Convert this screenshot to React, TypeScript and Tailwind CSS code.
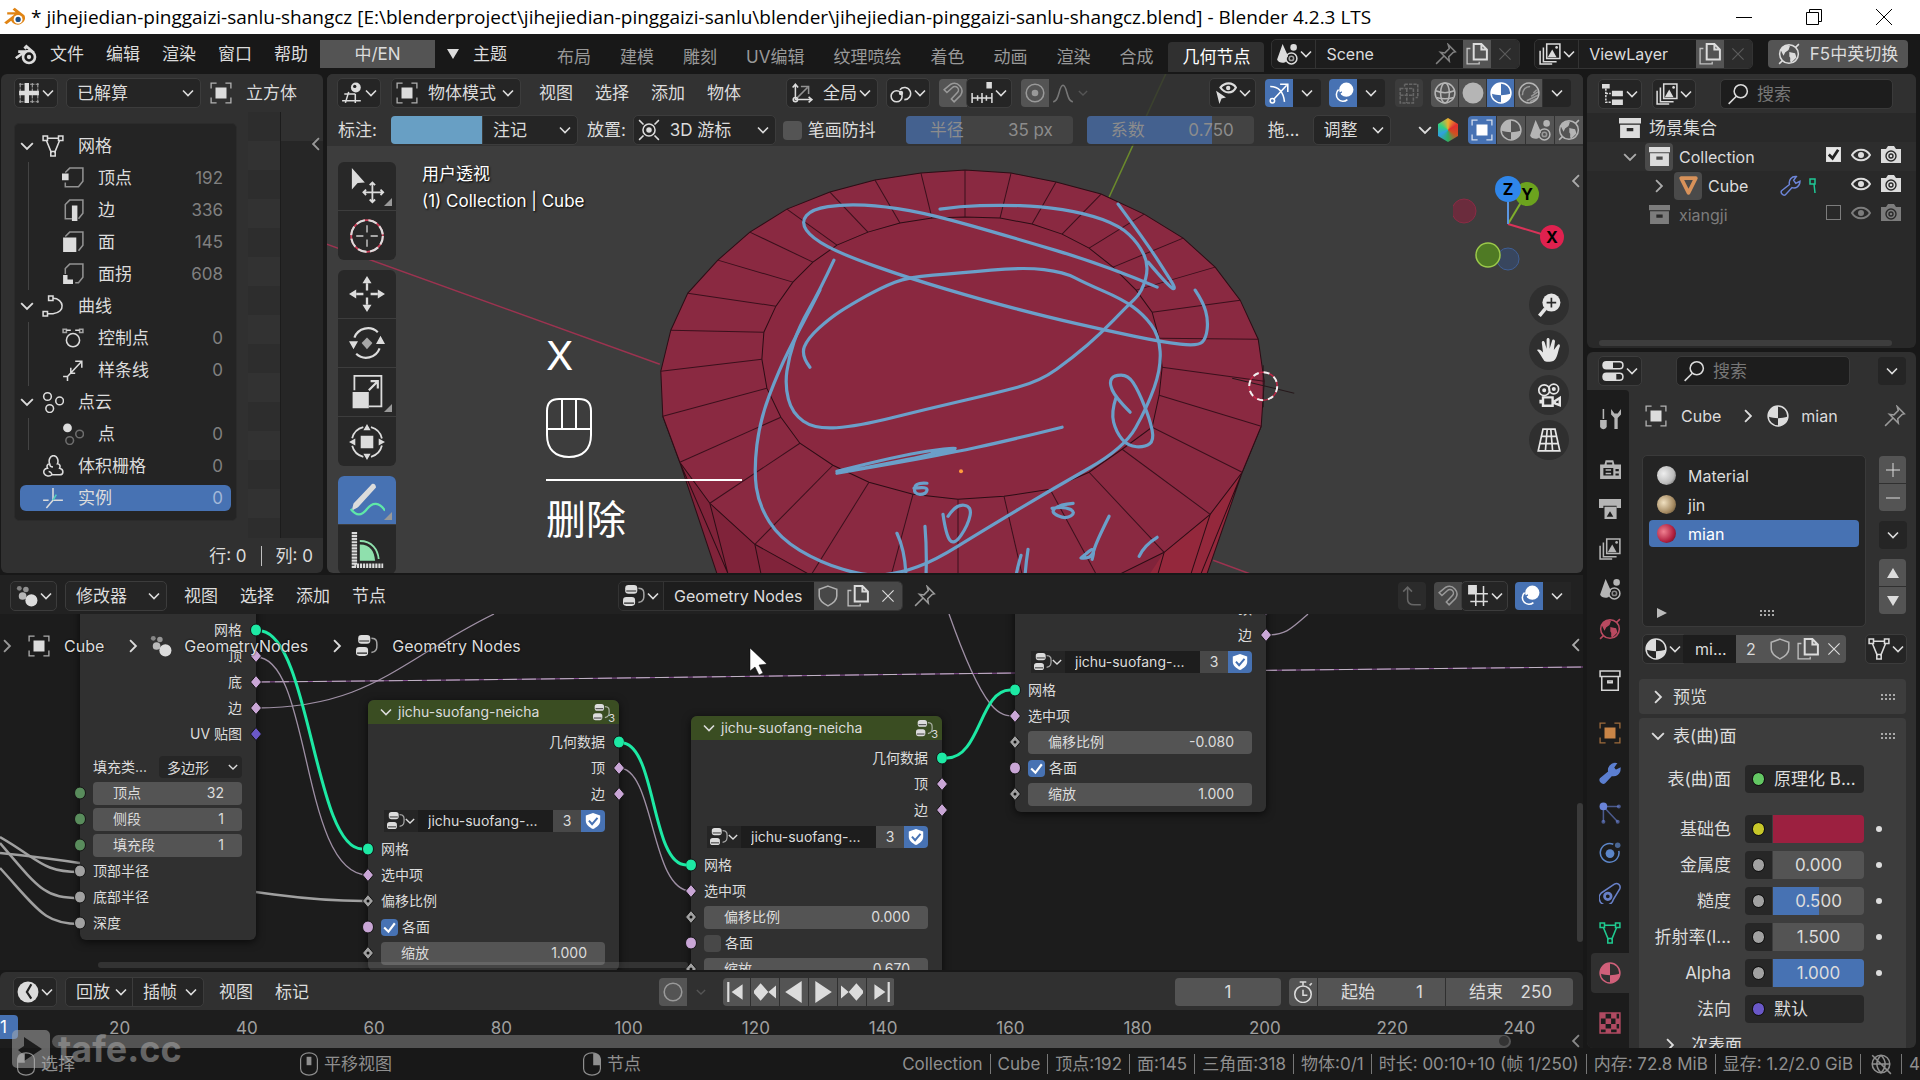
import type { ReactNode } from "react";
import clsx from "clsx";

const icons: Record<string, ReactNode> = {
  blender: (
    <>
      <path d="M1 14.5 9.5 8H3.5V6h7L8 3.800 9.800 2.200l8 6.300a6 5.600 0 1 1-11 4.600L3 16z" fill="currentColor" stroke="none" />
      <circle cx="12.600" cy="12" r="3.700" className="fill-white" stroke="none" />
      <circle cx="12.600" cy="12" r="2.200" className="fill-[#1f4f85]" stroke="none" />
    </>
  ),
  blenderMono: (
    <>
      <path d="M1.500 13.500 9 8H3.500m7-2.500L8.500 4M9.500 3l7 6" strokeWidth="2.200" />
      <circle cx="12.500" cy="12.500" r="5" strokeWidth="2.200" />
      <circle cx="12.500" cy="12.500" r="1.800" fill="currentColor" stroke="none" />
    </>
  ),
  spreadsheet: (
    <>
      <path d="M1 2h18M1 18h18M2 1v18M18 1v18M13 1v18" strokeWidth="1" opacity=".7" strokeDasharray="4 1" />
      <path d="M8 1v18M1 10h18" strokeWidth="4" />
    </>
  ),
  object: (
    <>
      <path d="M1 6V1h5M14 1h5v5M19 14v5h-5M6 19H1v-5" strokeWidth="1.200" opacity=".75" />
      <path d="M5 5h10v10H5z" fill="currentColor" stroke="none" />
    </>
  ),
  viewport: (
    <>
      <path d="M1 17h17M3 11h10M7 9 4 19M13 11v8" />
      <circle cx="13.500" cy="5" r="4.500" fill="currentColor" stroke="none" />
      <circle cx="12.500" cy="4" r="1.500" className="fill-[#222]" stroke="none" />
    </>
  ),
  meshData: (
    <>
      <path d="M5 3h10M4 5l4.500 11M16 5l-4.500 11" />
      <path d="M1 1h4v4H1zM15 1h4v4h-4zM8 15h4v4H8z" />
    </>
  ),
  vertex: (
    <>
      <path d="M3 5 7 1h12v12l-4 5H3v-4" opacity=".6" />
      <path d="M0 6h6v6H0z" fill="currentColor" stroke="none" />
    </>
  ),
  edge: (
    <>
      <path d="M9 18H3V5l4-4h12v12l-4 5" opacity=".6" />
      <path d="M9 6h5v14H9z" fill="currentColor" stroke="none" />
    </>
  ),
  face: (
    <>
      <path d="M3 5 7 1h12v12l-4 5" opacity=".6" />
      <path d="M1 6h12v13H1z" fill="currentColor" stroke="none" />
    </>
  ),
  corner: (
    <>
      <path d="M3 10V5l4-4h12v12l-4 5h-3" opacity=".6" />
      <path d="M1 11h4v4h5v4H1z" fill="currentColor" stroke="none" />
    </>
  ),
  curve: (
    <>
      <path d="M10 3c10 0 12 13 0 14H5" />
      <path d="M6 1h4v4H6zM1 15h4v4H1z" />
    </>
  ),
  controlPoint: (
    <>
      <circle cx="10" cy="12" r="6" />
      <path d="M4 3h4M12 3h4" />
      <path d="M1 2h3v3H1zM16 2h3v3h-3z" opacity=".7" />
    </>
  ),
  spline: <path d="M1 16h4v4M5 16 18 2M12 2h6v6M8 8v5h4" />,
  pointCloud: (
    <>
      <circle cx="5" cy="5" r="3.500" />
      <circle cx="16" cy="9" r="3.500" />
      <circle cx="7" cy="16" r="3.500" />
    </>
  ),
  point: (
    <>
      <circle cx="5" cy="4.500" r="4" fill="currentColor" stroke="none" />
      <circle cx="16" cy="10" r="3.500" opacity=".4" />
      <circle cx="7" cy="16" r="3.500" opacity=".4" />
    </>
  ),
  volume: <path d="M7 8a4 5 0 1 1 7 0c2 0 3 2 2 4 4 1 4 6 0 6H9c-2 2-6 1-7-1s0-5 3-5c-1-2 0-4 2-4zm0 0c0 2 1 3 3 3M9 18c0-2-2-3-3-3" />,
  axes: (
    <>
      <path d="M10 1v11l-6 7M10 12h9M1 12h5" />
      <path d="m10 12 3-5" className="stroke-[#50d0c0]" />
    </>
  ),
  orientation: (
    <>
      <path d="M4 2v14h15M1.500 5 4 2l2.500 3M16 13.500l3 2.500-3 2.500" />
      <path d="M4 16 15 5M9 4h7v7" opacity=".6" />
      <circle cx="4" cy="16" r="2" />
    </>
  ),
  pivot: (
    <>
      <circle cx="6" cy="13" r="5" />
      <path d="M9 7a5.500 5.500 0 1 1 4 9" />
      <circle cx="10" cy="10" r="2" fill="currentColor" stroke="none" />
    </>
  ),
  magnet: <path d="M2 7 8 2a7 7 0 0 1 9 10l-6 6-2.500-2.500 5.500-6a3 3 0 0 0-4.500-4.500L4.500 9.500z" />,
  snap: (
    <>
      <path d="M1 10v9M6 12v5M10 10v9M14 12v5M19 10v9M1 14.500h18" />
      <path d="M14 0h5v6h-5z" fill="currentColor" stroke="none" />
    </>
  ),
  proportional: (
    <>
      <circle cx="10" cy="10" r="8" />
      <circle cx="10" cy="10" r="3" fill="currentColor" stroke="none" />
    </>
  ),
  falloff: <path d="M1 18c6 0 5-15 9-15s3 15 9 15" />,
  visibility: (
    <>
      <path d="M5 5c4-5 11-5 14 0-3 6-10 6-14 0z" strokeWidth="2" />
      <circle cx="12" cy="5.500" r="2" fill="currentColor" stroke="none" />
      <path d="m1 8 9 6-4 1-2 5z" fill="currentColor" stroke="none" />
    </>
  ),
  gizmo: (
    <>
      <path d="M2 4c8 0 12 5 13 14M5 16 17 3M11 2h7v7" />
      <circle cx="4" cy="17" r="2" />
    </>
  ),
  overlay: (
    <>
      <circle cx="13" cy="7" r="6.500" fill="currentColor" stroke="none" />
      <path d="M6 7a6 6 0 1 0 8 9" />
      <path d="M6 12a5 5 0 0 1 3-3" className="stroke-[#4772b3]" />
    </>
  ),
  xray: <path d="M2 6h12v13H2zM6 2h12v12M2 12h12M8 6v13M6 2v2M18 14h-2" strokeDasharray="3 1" />,
  wire: (
    <>
      <circle cx="10" cy="10" r="9" />
      <ellipse cx="10" cy="10" rx="4" ry="9" />
      <path d="M1.500 8c5 2 12 2 17 0M2 14c5 1.500 11 1.500 16 0" />
    </>
  ),
  solid: <circle cx="10" cy="10" r="9.500" fill="currentColor" stroke="none" />,
  material: (
    <>
      <circle cx="10" cy="10" r="9" />
      <path d="M10 1a9 9 0 0 0-9 9.500c3 1 6 1.500 9 1.500z" fill="currentColor" stroke="none" />
      <path d="M10 12c3 0 6-.5 9-1.500A9 9 0 0 1 10 19z" fill="currentColor" stroke="none" />
    </>
  ),
  rendered: (
    <>
      <circle cx="10" cy="10" r="9" />
      <path d="M4 12c0-5 3-8 7-8M8 17l10-5M11 18l6-3M12 13l6-4M14 10l3-3" opacity=".7" />
    </>
  ),
  scene: (
    <>
      <path d="M6 1 1 15c1 3 6 4 8 2 0-2 1-4 2-5z" fill="currentColor" stroke="none" />
      <circle cx="16" cy="4" r="3" fill="currentColor" stroke="none" />
      <circle cx="14" cy="14" r="5" />
      <circle cx="14" cy="14" r="2" opacity=".7" />
    </>
  ),
  world: (
    <>
      <circle cx="10" cy="10" r="8.500" />
      <path d="M3 6c2-3 5-4 7-3l-1 3-3 2-1 2zM11 9l4 1 1 3-4 4c-1-2 1-3-1-5z" fill="currentColor" />
      <path d="m16 4 3-3M4 16l-3 3" />
    </>
  ),
  pin: <path d="m12 1.500 6.500 6.500-2 .5-4 4 .5 4-8-8 4 .5 4-4zM8 12l-7 7" />,
  copy: (
    <>
      <path d="M7 1h7l5 5v9H7zM14 1v5h5" strokeWidth="1.800" />
      <path d="M4 5H1v14h11v-2" strokeWidth="1.200" opacity=".8" />
    </>
  ),
  close: <path d="m3 3 14 14M17 3 3 17" />,
  shield: <path d="m10 1 8 3v6c0 4-4 7-8 9-4-2-8-5-8-9V4z" opacity=".7" />,
  shieldCheck: (
    <>
      <path d="m10 1 8 3v6c0 4-4 7-8 9-4-2-8-5-8-9V4z" fill="currentColor" stroke="none" />
      <path d="m5.500 9.500 3.500 4 6-7" className="stroke-[#4772b3]" strokeWidth="2.200" />
    </>
  ),
  images: (
    <>
      <path d="M7 1h12v13H7zM4 4v13h12M1 7v12h11" />
      <path d="m8 13 4-7 4 7z" fill="currentColor" stroke="none" />
      <circle cx="16" cy="4" r="1.200" fill="currentColor" stroke="none" />
    </>
  ),
  tree: (
    <>
      <path d="M0 1h7v4H0zM9 7h10v5H9zM9 15h10v5H9z" fill="currentColor" stroke="none" />
      <path d="M3.500 5v12.500H8M3.500 9.500H8" strokeDasharray="2 1" />
    </>
  ),
  search: (
    <>
      <circle cx="12.500" cy="7.500" r="6" />
      <path d="m8.500 12-7 7" />
    </>
  ),
  collection: (
    <path fillRule="evenodd" d="M0 1h20v5H0zM1 7h18v12H1zm6 3v3h6v-3z" fill="currentColor" stroke="none" />
  ),
  collectionLine: <path d="M1 1h18v5H1zM2.500 6v12.500h15V6M8 10h4v1.500H8z" />,
  eye: (
    <>
      <path d="M1 10c4-7 14-7 18 0-4 7-14 7-18 0z" strokeWidth="2" />
      <circle cx="10" cy="10" r="3" fill="currentColor" stroke="none" />
    </>
  ),
  camera: (
    <>
      <path d="M0 4h5l2-3h6l2 3h5v14H0z" fill="currentColor" stroke="none" />
      <circle cx="10" cy="11" r="5" className="stroke-[#2a2a2a]" />
      <circle cx="10" cy="11" r="2" className="stroke-[#2a2a2a]" />
    </>
  ),
  objectMesh: <path d="M3 3h14l-7 14z" strokeWidth="3.500" strokeLinejoin="round" />,
  wrenchLine: <path d="M1.500 15 9 9c-1-4 2-8 6.500-7.500L13 5l2 3 4-2c0 5-4 7-7.500 6L5 19c-2 1-5-2-3.500-4z" />,
  wrench: <path d="M1.500 15 9 9c-1-4 2-8 6.500-7.500L13 5l2 3 4-2c0 5-4 7-7.500 6L5 19c-2 1-5-2-3.500-4z" fill="currentColor" />,
  toggles: (
    <>
      <rect x="1" y="1.500" width="18" height="6.500" rx="3" />
      <rect x="1" y="12" width="18" height="6.500" rx="3" />
      <path d="M4 1.500h6V8H4a3 3 0 0 1 0-6.500M4 12h9v6.500H4A3 3 0 0 1 4 12" fill="currentColor" stroke="none" />
    </>
  ),
  tools: (
    <>
      <path d="M4 1v9" />
      <path d="M1 11h6v6c-1 3-5 3-6 0z" fill="currentColor" stroke="none" />
      <path d="M11 1v5l3 3v10h3V9l3-3V1l-3 4h-3z" fill="currentColor" stroke="none" />
    </>
  ),
  render: (
    <>
      <path fillRule="evenodd" d="M1 6h4l1-4h7l1 4h6v13H1zm3 3v7h9V9zM7 4v2h5V4zm8 6v2h3v-2zm0 4v2h3v-2z" fill="currentColor" stroke="none" />
      <path d="M6 11h5M6 14h5" />
    </>
  ),
  printer: (
    <>
      <path d="M0 1h20v8h-4V7H4v2H0z" fill="currentColor" stroke="none" />
      <path fillRule="evenodd" d="M5 8h11v11H5zm2 9h6l-3-5z" fill="currentColor" stroke="none" />
    </>
  ),
  particles: (
    <>
      <path d="M4 4v14M4 4h14M4 4l13 14" opacity=".6" />
      <circle cx="4" cy="4" r="3.500" fill="currentColor" stroke="none" />
      <circle cx="18" cy="4" r="1.800" fill="currentColor" stroke="none" opacity=".6" />
      <circle cx="4" cy="18" r="1.800" fill="currentColor" stroke="none" opacity=".6" />
      <circle cx="17" cy="18" r="1.800" fill="currentColor" stroke="none" opacity=".6" />
    </>
  ),
  physics: (
    <>
      <path d="M13 2a8.500 8.500 0 1 0 5 6" />
      <circle cx="10" cy="10.500" r="4" fill="currentColor" stroke="none" />
      <circle cx="17" cy="3" r="2.500" fill="currentColor" stroke="none" opacity=".7" />
    </>
  ),
  constraint: (
    <>
      <path d="M2 10 14 2c3-2 6 1 5 4l-6 10a6.500 6.500 0 1 1-11-6z" />
      <circle cx="8" cy="13" r="3" strokeWidth="2.500" />
    </>
  ),
  texture: (
    <>
      <path d="M1 1h18v18H1z" />
      <path d="M1 1h5v5H1zM11 1h5v5h-5zM6 6h5v5H6zM15 6h4v5h-4zM1 11h5v5H1zM11 11h5v5h-5zM6 15h5v4H6zM16 15h3v4h-3z" fill="currentColor" stroke="none" />
    </>
  ),
  nodeTree: (
    <>
      <rect x="2" y="0" width="11" height="8" rx="3" fill="currentColor" stroke="none" />
      <rect x="0" y="11" width="11" height="8" rx="3" fill="currentColor" stroke="none" />
      <path d="M3 5.500h9M1 16.500h9" className="stroke-[#222]" strokeWidth="1" />
      <path d="M14 3c5 0 5 3 5 6s0 6-5 7" opacity=".7" />
    </>
  ),
  geoNodes: (
    <>
      <circle cx="14" cy="14" r="5.500" fill="currentColor" stroke="none" />
      <circle cx="6" cy="10" r="3.500" fill="currentColor" stroke="none" opacity=".8" />
      <circle cx="9" cy="4" r="2.500" fill="currentColor" stroke="none" opacity=".6" />
      <circle cx="3" cy="3" r="2.200" fill="currentColor" stroke="none" opacity=".5" />
    </>
  ),
  parent: <path d="M2 6 6 2l4 4M6 2v11c0 4 3 5 6 5h6" />,
  gridSnap: (
    <>
      <path d="M8 3v16M15 1v18M1 8h18M3 15h16" />
      <path d="M1 0h8v8H1z" fill="currentColor" stroke="none" />
    </>
  ),
  clock: (
    <>
      <circle cx="10" cy="10" r="9.500" fill="currentColor" stroke="none" />
      <path d="m13 3-4 7 4 6" className="stroke-[#222]" strokeWidth="2" />
    </>
  ),
  stopwatch: (
    <>
      <circle cx="10" cy="12" r="7.500" />
      <path d="M7 1h6M10 1v3M16 4l2-2M10 8v5h4" />
    </>
  ),
  cursor3d: (
    <>
      <circle cx="10" cy="10" r="5.500" />
      <circle cx="10" cy="10" r="2.500" fill="currentColor" stroke="none" />
      <path d="m1 1 4 4M19 1l-4 4M1 19l4-4M19 19l-4-4" />
    </>
  ),
  mouse: <path d="M3 6c0-7 14-7 14 0v8c0 7-14 7-14 0z" />,
  globeOff: (
    <>
      <circle cx="10" cy="10" r="8" />
      <path d="M2 10h16M10 2c-5 5-5 11 0 16 5-5 5-11 0-16M2 2l17 17" />
    </>
  ),
  zoom: (
    <>
      <circle cx="12" cy="8" r="7.500" fill="currentColor" stroke="none" />
      <path d="m7 13-5 6" strokeWidth="3" />
      <path d="M12 4v8M8 8h8" className="stroke-[#2b2b2b]" />
    </>
  ),
  hand: <path d="M6 19c-2-3-4-7-6-9 2-1 3 0 5 2L4 4c0-2 2-2 2.500 0L8 9V1.500c0-2 2.500-2 2.500 0V9l2-6.500c.5-2 2.500-1.500 2.500.5L14 10l3-4c1-1.500 2.500-.5 2 1-2 5-2 12-7 12.500-2 .5-5 .5-6-.5z" fill="currentColor" stroke="none" />,
  movie: (
    <>
      <circle cx="6" cy="6" r="4.500" />
      <circle cx="14" cy="5" r="4" />
      <path d="M5 12h8v7H5zM3 14v3M15 15l4-2.500v6L15 17z" strokeWidth="2" />
      <circle cx="6" cy="6" r="1" fill="currentColor" />
      <circle cx="14" cy="5" r="1" fill="currentColor" />
    </>
  ),
  persp: <path d="M5 1h10l4 18H1zM3.500 7h13M2 13h16M8.500 1 7 19M11.500 1 13 19" />,
  selectMove: (
    <>
      <path d="m2 0 9 10-5 .5L2 15z" fill="currentColor" stroke="none" transform="scale(.8)" />
      <path d="M13 8v11M8 13.500h11M11.500 9.500 13 8l1.500 1.500M11.500 17.500 13 19l1.500-1.500M9.500 12 8 13.500 9.500 15M17.500 12l1.500 1.500-1.500 1.500" strokeWidth="1" />
    </>
  ),
  cursorTool: (
    <>
      <circle cx="10" cy="10" r="8.800" className="stroke-[#d0405a]" strokeWidth="1" />
      <circle cx="10" cy="10" r="8.800" strokeWidth="1.200" strokeDasharray="5 2" />
      <path d="M10 4v4M10 12v4M4 10h4M12 10h4" strokeWidth="1" opacity=".7" />
    </>
  ),
  move: (
    <>
      <path d="M10 0 7.500 4h5zM10 20l-2.500-4h5zM0 10l4-2.500v5zM20 10l-4-2.500v5z" fill="currentColor" stroke="none" />
      <path d="M10 4v4M10 12v4M4 10h4M12 10h4" strokeWidth="1.300" />
    </>
  ),
  rotate: (
    <>
      <path d="M3 7a8 8 0 0 1 13-3M17 13a8 8 0 0 1-13 3" strokeWidth="1.200" />
      <path d="m0 9 5 0-2.500 4.500zM15 10.500h5L17.500 6z" fill="currentColor" stroke="none" />
      <path d="m10 7 3 3-3 3.500L7 10z" fill="currentColor" stroke="none" opacity=".7" />
    </>
  ),
  scale: (
    <>
      <path d="M3 9V1h15v17h-7" strokeWidth="1" />
      <path d="M2 10h9v9H2z" fill="currentColor" stroke="none" />
      <path d="m11 9 5-5M12 4h4v4" strokeWidth="1.200" />
    </>
  ),
  transform: (
    <>
      <circle cx="10" cy="10" r="8.500" strokeWidth="1" strokeDasharray="9 4.350" strokeDashoffset="-2" />
      <path d="M6.500 6.500h7v7h-7zM10 0 8 3.500h4zM10 20l-2-3.500h4zM0 10l3.500-2v4zM20 10l-3.500-2v4z" fill="currentColor" stroke="none" />
    </>
  ),
  annotate: (
    <>
      <path d="M12 2c1-2 3-1 3 1L5 14l-3.500 2L2.500 12z" fill="currentColor" stroke="none" />
      <path d="M1 15c3 4 6 4 9 0s7-4 10 1" className="stroke-[#5fe8a8]" strokeWidth="1.200" />
    </>
  ),
  measure: (
    <>
      <path d="M3 0v19h16" strokeWidth="3" strokeDasharray="1.200 .5" />
      <path d="M6 7c6 0 8 4 8.500 9H6z" className="fill-[#8fe0ad]" stroke="none" />
      <path d="M6 5c7 0 10 5 10.500 10" className="stroke-[#8fe0ad]" strokeWidth="1" />
    </>
  ),
  toStart: <path d="M2 1h2v18H2zM16 3v14L6 10z" fill="currentColor" stroke="none" />,
  prevKey: <path d="m6 2 7 8-7 8-7-8zM20 4v12l-7-6z" fill="currentColor" stroke="none" />,
  playBack: <path d="M17 0v20L2 10z" fill="currentColor" stroke="none" />,
  play: <path d="M3 0v20l15-10z" fill="currentColor" stroke="none" />,
  nextKey: <path d="m14 2 7 8-7 8-7-8zM0 4v12l7-6z" fill="currentColor" stroke="none" />,
  toEnd: <path d="M16 1h2v18h-2zM4 3v14l10-7z" fill="currentColor" stroke="none" />,
  record: <circle cx="10" cy="10" r="8" />,
};

function Icon({ name, className = "size-[22px]" }: { name: string; className?: string }) {
  return (
    <svg viewBox="0 0 20 20" fill="none" stroke="currentColor" strokeWidth="1.400" aria-hidden="true" className={clsx("shrink-0", className)}>
      {icons[name]}
    </svg>
  );
}

function Chevron({ dir = "down", className = "size-3" }: { dir?: "down" | "right" | "left"; className?: string }) {
  const d = { down: "m1 3.500 5 5 5-5", right: "m3.500 1 5 5-5 5", left: "m8.500 1-5 5 5 5" }[dir];
  return (
    <svg viewBox="0 0 12 12" fill="none" stroke="currentColor" strokeWidth="1.600" aria-hidden="true" className={clsx("shrink-0", className)}>
      <path d={d} />
    </svg>
  );
}

function IconButton({ name, label, className }: { name: string; label: string; className?: string }) {
  return (
    <button aria-label={label} className={clsx("flex h-7 shrink-0 items-center justify-center", className)}>
      <Icon name={name} />
    </button>
  );
}

function IconMenu({ name, label, className }: { name: string; label: string; className?: string }) {
  return (
    <button aria-label={label} className={clsx("flex h-7 shrink-0 items-center justify-center gap-0.5 rounded bg-[#252525] outline outline-[#3c3c3c]", className)}>
      <Icon name={name} />
      <Chevron />
    </button>
  );
}

function MenuArrow({ label, className }: { label: string; className?: string }) {
  return (
    <button aria-label={label} className={clsx("flex h-7 w-7 shrink-0 items-center justify-center bg-[#252525]", className)}>
      <Chevron />
    </button>
  );
}

function Dropdown({ label, value, icon, className }: { label: string; value: string; icon?: string; className?: string }) {
  return (
    <div className={clsx("relative flex h-7 shrink-0 items-center rounded bg-[#252525] pl-2.5 outline outline-[#3c3c3c]", className)}>
      {icon && <Icon name={icon} className="-ml-1.5 mr-2.5 size-[22px]" />}
      <select aria-label={label} className="h-full w-full min-w-0 appearance-none bg-transparent outline-none">
        <option>{value}</option>
      </select>
      <Chevron className="pointer-events-none absolute right-1.5 size-3" />
    </div>
  );
}

function MenuItems({ items, className }: { items: string[]; className?: string }) {
  return (
    <nav className={clsx("flex shrink-0 items-center gap-[22px]", className)}>
      {items.map((item) => (
        <button key={item} className="whitespace-nowrap">{item}</button>
      ))}
    </nav>
  );
}

function TitleBar() {
  return (
    <header className="flex h-[34px] shrink-0 items-center bg-white pl-[3px] font-['Open_Sans',sans-serif] text-[19px] text-black">
      <Icon name="blender" className="size-6 text-[#e08414]" />
      <h1 className="ml-1 whitespace-nowrap">
        * jihejiedian-pinggaizi-sanlu-shangcz [E:\blenderproject\jihejiedian-pinggaizi-sanlu\blender\jihejiedian-pinggaizi-sanlu-shangcz.blend] - Blender 4.2.3 LTS
      </h1>
      <div className="ml-auto flex items-center gap-[54px] pr-7">
        <button aria-label="最小化" className="h-px w-4 bg-black" />
        <button aria-label="还原">
          <svg viewBox="0 0 16 16" fill="none" stroke="currentColor" className="size-4">
            <path d="M.5 3.500h12v12H.5zM3.500 3V.5h12v12H13" />
          </svg>
        </button>
        <button aria-label="关闭">
          <svg viewBox="0 0 16 16" fill="none" stroke="currentColor" className="size-4">
            <path d="m0 0 16 16M16 0 0 16" />
          </svg>
        </button>
      </div>
    </header>
  );
}

const workspaces = ["布局", "建模", "雕刻", "UV编辑", "纹理喷绘", "着色", "动画", "渲染", "合成", "几何节点"];

function DataBlock({ icon, name, className, pin }: { icon: string; name: string; className?: string; pin?: boolean }) {
  return (
    <div className={clsx("flex h-7 shrink-0 items-center overflow-hidden rounded bg-[#1d1d1d] outline outline-[#333]", className)}>
      <button aria-label={name} className="flex h-full w-11 items-center justify-center gap-0.5 border-r border-[#333]">
        <Icon name={icon} />
        <Chevron />
      </button>
      <input aria-label={name} defaultValue={name} className="h-full min-w-0 flex-1 bg-transparent pl-2.5 text-[16px] outline-none" />
      {pin && <Icon name="pin" className="mr-1.5 size-[22px] text-[#808080]" />}
      <IconButton name="copy" label="新建" className="w-7 bg-[#545454]" />
      <button aria-label="移除" className="flex h-full w-7 items-center justify-center bg-[#2c2c2c] text-[#5c5c5c]">
        <Icon name="close" className="size-4" />
      </button>
    </div>
  );
}

function TopBar() {
  return (
    <div className="flex h-[39px] shrink-0 items-center bg-[#181818] pl-3.5">
      <Icon name="blenderMono" className="size-6" />
      <MenuItems items={["文件", "编辑", "渲染", "窗口", "帮助"]} className="ml-3" />
      <button className="ml-3 h-7 w-[115px] shrink-0 bg-[#545454]">中/EN</button>
      <button className="ml-3 flex shrink-0 items-center gap-3.5">
        <svg viewBox="0 0 12 10" className="h-2.5 w-3 fill-current" aria-hidden="true"><path d="M0 0h12L6 10z" /></svg>
        主题
      </button>
      <nav className="ml-9 flex shrink-0 gap-px self-end pb-px text-[#989898]">
        {workspaces.map((w) => (
          <button key={w} className={clsx("h-[30px] whitespace-nowrap rounded-t px-[14px]", w === "几何节点" && "bg-[#303030] text-white")}>
            {w}
          </button>
        ))}
      </nav>
      <div className="ml-2 flex min-w-0 flex-1 items-center justify-between pr-3">
        <DataBlock icon="scene" name="Scene" className="w-[247px]" pin />
        <DataBlock icon="images" name="ViewLayer" className="w-[217px]" />
        <button className="flex h-7 w-[140px] shrink-0 items-center justify-center gap-2.5 whitespace-nowrap rounded bg-[#545454]">
          <Icon name="world" />
          F5中英切换
        </button>
      </div>
    </div>
  );
}

type TreeItem = { label: string; icon: string; count?: number; parent?: boolean; top?: boolean; active?: boolean };

const dataTree: TreeItem[] = [
  { label: "网格", icon: "meshData", parent: true },
  { label: "顶点", icon: "vertex", count: 192 },
  { label: "边", icon: "edge", count: 336 },
  { label: "面", icon: "face", count: 145 },
  { label: "面拐", icon: "corner", count: 608 },
  { label: "曲线", icon: "curve", parent: true },
  { label: "控制点", icon: "controlPoint", count: 0 },
  { label: "样条线", icon: "spline", count: 0 },
  { label: "点云", icon: "pointCloud", parent: true },
  { label: "点", icon: "point", count: 0 },
  { label: "体积栅格", icon: "volume", count: 0, top: true },
  { label: "实例", icon: "axes", count: 0, top: true, active: true },
];

function Spreadsheet() {
  return (
    <section className="flex w-[322px] shrink-0 flex-col overflow-hidden rounded-md bg-[#303030]">
      <div className="flex h-[38px] shrink-0 items-center pl-3.5">
        <IconMenu name="spreadsheet" label="编辑器类型" className="w-[42px]" />
        <Dropdown label="求值状态" value="已解算" className="ml-2.5 w-[133px]" />
        <Icon name="object" className="ml-2.5 size-[22px]" />
        <span className="ml-3.5">立方体</span>
      </div>
      <div className="flex min-h-0 flex-1">
        <div className="mt-3 ml-3.5 w-[221px] shrink-0 self-start rounded bg-[#242424] px-[5px] pt-1.5 pb-1.5 outline outline-[#2b2b2b]">
          {dataTree.map((item) => (
            <button key={item.label} className="flex h-8 w-full items-center text-left">
              <span className={clsx("flex h-[26px] w-full items-center", item.active && "rounded-md bg-[#4772b3]")}>
                <span className={clsx("flex items-center", item.parent || item.top ? "w-[22px]" : "w-[42px] self-stretch pl-2")}>
                  {item.parent && <Chevron className="size-3.5" />}
                  {!item.parent && !item.top && <span className="h-8 w-px shrink-0 bg-[#444]" />}
                </span>
                <Icon name={item.icon} />
                <span className="ml-3.5">{item.label}</span>
                {item.count !== undefined && (
                  <span className={clsx("ml-auto pr-2", item.active ? "text-[#a3b8d8]" : "text-[#808080]")}>{item.count}</span>
                )}
              </span>
            </button>
          ))}
        </div>
        <div className="ml-3 flex flex-1">
          <div className="w-[33px] border-r border-[#1c1c1c] bg-[repeating-linear-gradient(#2d2d2d_0_29px,#323232_29px_58px)]" />
          <div className="flex-1 border-t-[29px] border-[#303030] bg-[#262626] text-right">
            <Chevron dir="left" className="-mt-1 ml-auto size-3.5 text-[#989898]" />
          </div>
        </div>
      </div>
      <p className="flex h-[35px] shrink-0 items-center justify-end gap-3.5 pr-2.5">
        <span>行: 0</span>
        <span className="h-5 w-px bg-[#c0c0c0]" />
        <span>列: 0</span>
      </p>
    </section>
  );
}

const outerRing = [
  [965, 170], [1011, 173], [1056, 182], [1101, 194], [1144, 214], [1183, 238], [1215, 267], [1240, 300],
  [1258, 339], [1264, 381], [1261, 426], [1242, 472], [1210, 514], [1164, 552], [1101, 583], [1028, 600],
  [958, 605], [885, 598], [811, 575], [755, 544], [710, 503], [680, 462], [663, 416], [661, 371],
  [671, 330], [688, 293], [718, 260], [750, 232], [787, 209], [830, 192], [875, 180], [921, 173],
];
const innerRing = [
  [965, 217], [1000, 218], [1032, 224], [1062, 234], [1089, 248], [1113, 267], [1136, 290], [1152, 312],
  [1159, 338], [1162, 367], [1159, 395], [1152, 427], [1122, 449], [1089, 472], [1050, 489], [1004, 496],
  [958, 499], [913, 494], [869, 482], [833, 465], [800, 443], [781, 417], [767, 388], [762, 359],
  [764, 332], [776, 306], [793, 282], [813, 262], [837, 245], [868, 232], [900, 223], [932, 218],
];

// Draws a smooth line through the points by curving between their midpoints.
function stroke(points: number[][]) {
  const mids = points.slice(1, -1).map(([x, y], i) => {
    const [nx, ny] = points[i + 2];
    const last = i === points.length - 3;
    return `Q${x} ${y} ${last ? nx : (x + nx) / 2} ${last ? ny : (y + ny) / 2}`;
  });
  return `M${points[0].join(" ")}${mids.join("")}`;
}

const annotations = [
  [[940, 209], [960, 206], [1000, 205], [1040, 206], [1085, 213], [1120, 226], [1138, 243], [1149, 265], [1142, 292], [1126, 307], [1101, 333], [1073, 357], [1040, 381], [995, 393], [926, 409], [858, 426], [815, 429], [792, 413], [785, 385], [789, 357], [799, 327], [820, 290], [834, 260]],
  [[820, 290], [810, 310], [797, 334], [779, 370], [760, 420], [754, 470], [759, 505], [780, 538], [820, 562], [866, 576], [900, 573], [935, 560], [980, 532], [1052, 489], [1124, 448], [1147, 407], [1161, 368], [1159, 335], [1143, 314], [1122, 299], [1085, 283], [1064, 272], [1024, 267], [958, 273], [908, 277], [882, 287], [850, 305], [830, 318], [808, 338], [801, 355], [810, 367]],
  [[1157, 287], [1105, 265], [1008, 236], [934, 215], [885, 206], [844, 204], [812, 209], [801, 222], [812, 238], [844, 255], [909, 278], [983, 300], [1048, 317], [1105, 330], [1162, 342], [1198, 346], [1206, 338], [1208, 320], [1203, 302], [1195, 290]],
  [[1118, 204], [1146, 242], [1166, 273], [1176, 289], [1170, 288], [1148, 262]],
  [[1130, 412], [1115, 397], [1109, 382], [1114, 375], [1128, 375], [1138, 390], [1150, 420], [1154, 440], [1145, 447], [1128, 446], [1116, 432], [1111, 412], [1116, 397]],
  [[837, 471], [900, 455], [954, 447], [956, 449], [930, 453], [934, 454], [837, 473], [837, 473], [940, 455], [1010, 440], [1062, 427]],
  [[927, 483], [915, 482], [914, 494], [926, 494], [928, 486], [914, 488]],
  [[1073, 503], [1060, 504], [1050, 512], [1066, 519], [1076, 512], [1064, 506], [1052, 508]],
  [[943, 514], [946, 535], [954, 545], [968, 525], [972, 506], [956, 504], [948, 516]],
  [[897, 533], [905, 550], [906, 575]],
  [[925, 526], [927, 550], [926, 575]],
  [[1021, 555], [1018, 565], [1016, 575]],
  [[1028, 549], [1026, 562], [1025, 575]],
  [[1109, 516], [1096, 542], [1092, 557], [1080, 558], [1082, 557], [1096, 545], [1092, 559]],
  [[1157, 537], [1144, 545], [1139, 556]],
];

function MeshDrawing() {
  const join = (pts: number[][]) => pts.map((p) => p.join(",")).join(" ");
  return (
    <svg viewBox="327 74 1256 499" preserveAspectRatio="xMidYMid slice" className="absolute inset-0 size-full" aria-hidden="true">
      <path d="M327 244 660 364M1213 560l60 22" className="stroke-[#9c3350]" strokeWidth="1.500" />
      <path d="M1172 60 1109 197" className="stroke-[#6b8a2c]" strokeWidth="1.500" />
      <path d="M663 416 680 462 717 573 780 600H1150L1207 573 1242 472 1261 426z" className="fill-[#80233a]" />
      <path d="M1242 472 1207 573H1150L1164 552 1210 514z" className="fill-[#94283c]" />
      <path d="M663 416 680 462 717 573M710 503l18 70M680 462l48 111M755 544l6 29M1261 426l-19 46-35 101M1210 514l-19 59M1242 472l-41 101M1164 552l-6 21" className="fill-none stroke-[#2c0d15]" />
      <polygon points={join(outerRing)} className="fill-[#8a2941] stroke-[#2c0d15]" />
      <polygon points={join(innerRing)} className="fill-[#8a2840] stroke-[#2c0d15]" />
      {outerRing.map(([x, y], i) => (
        <line key={i} x1={x} y1={y} x2={innerRing[i][0]} y2={innerRing[i][1]} className="stroke-[#3a101c]" />
      ))}
      <circle cx="961" cy="471" r="2" className="fill-[#ff9d3c]" />
      <g className="fill-none stroke-[#6b9fc9]" strokeWidth="3.200" strokeLinecap="round" strokeLinejoin="round">
        {annotations.map((points, i) => (
          <path key={i} d={stroke(points)} />
        ))}
      </g>
      <path d="M1232 378 1294 393M1263 365v42" className="stroke-[#26181b]" />
      <circle cx="1263" cy="386" r="14" className="fill-none stroke-[#c02848]" strokeWidth="1.500" />
      <circle cx="1263" cy="386" r="14" className="fill-none stroke-[#f0f0f0]" strokeWidth="2" strokeDasharray="6 5" />
    </svg>
  );
}

function Slider({ label, value, fill }: { label: string; value: string; fill: string }) {
  return (
    <label className="relative flex h-7 w-[167px] shrink-0 items-center overflow-hidden rounded bg-[#434343] text-[#8c8c8c]">
      <span className={clsx("absolute inset-y-0 left-0 bg-[#44618f]", fill)} />
      <span className="relative ml-6 shrink-0">{label}</span>
      <input defaultValue={value} className="relative w-0 min-w-0 flex-1 bg-transparent pr-5 text-right outline-none" />
    </label>
  );
}

const toolGroups = [
  [["selectMove", "选择"], ["cursorTool", "游标"]],
  [["move", "移动"], ["rotate", "旋转"], ["scale", "缩放"], ["transform", "变换"]],
  [["annotate", "标注"], ["measure", "测量"]],
];

function Viewport() {
  return (
    <section className="relative flex min-w-0 flex-1 flex-col overflow-hidden rounded-md bg-[#3d3d3d]">
      <MeshDrawing />
      <div className="relative flex h-[72px] shrink-0 flex-col gap-[9px] bg-[#303030]/80 pt-[5px] pl-[11px]">
        <div className="flex items-center">
          <IconMenu name="viewport" label="编辑器类型" className="w-[42px]" />
          <Dropdown label="模式" value="物体模式" icon="object" className="ml-3 w-[128px]" />
          <MenuItems items={["视图", "选择", "添加", "物体"]} className="ml-[19px]" />
          <Dropdown label="坐标系" value="全局" icon="orientation" className="ml-[46px] w-[90px]" />
          <IconMenu name="pivot" label="轴心点" className="ml-2.5 w-[42px]" />
          <IconButton name="magnet" label="吸附" className="ml-2.5 w-7 rounded-l bg-[#545454] text-[#999]" />
          <IconMenu name="snap" label="吸附至" className="w-11" />
          <IconButton name="proportional" label="衰减编辑" className="ml-2.5 w-7 rounded-l bg-[#545454] text-[#999]" />
          <button aria-label="衰减类型" className="flex h-7 w-[42px] items-center justify-center gap-1 text-[#777]">
            <Icon name="falloff" />
            <Chevron className="size-2.5 text-[#555]" />
          </button>
          <div className="ml-auto flex items-center pr-3">
            <IconMenu name="visibility" label="可见性" className="w-[45px]" />
            <IconButton name="gizmo" label="控件" className="ml-2.5 w-7 rounded-l bg-[#4772b3] text-white" />
            <MenuArrow label="控件选项" className="rounded-r" />
            <IconButton name="overlay" label="叠加层" className="ml-2 w-7 rounded-l bg-[#4772b3] text-white" />
            <MenuArrow label="叠加层选项" className="rounded-r" />
            <IconButton name="xray" label="透视模式" className="ml-2.5 w-7 rounded bg-[#3c3c3c] text-[#666]" />
            <div className="ml-2 flex gap-px overflow-hidden rounded">
              <IconButton name="wire" label="线框" className="w-[27px] bg-[#545454] text-[#b5b5b5]" />
              <IconButton name="solid" label="实体" className="w-[27px] bg-[#545454] text-[#b5b5b5]" />
              <IconButton name="material" label="材质预览" className="w-[27px] bg-[#4772b3] text-white" />
              <IconButton name="rendered" label="渲染" className="w-[27px] bg-[#545454] text-[#b5b5b5]" />
              <MenuArrow label="着色选项" />
            </div>
          </div>
        </div>
        <div className="flex items-center">
          <span className="shrink-0">标注:</span>
          <button aria-label="标注颜色" className="ml-3.5 h-7 w-[92px] shrink-0 rounded-l bg-[#689fc4]" />
          <Dropdown label="图层" value="注记" className="w-[94px] rounded-l-none" />
          <span className="ml-2.5 shrink-0">放置:</span>
          <Dropdown label="放置" value="3D 游标" icon="cursor3d" className="ml-2 w-[141px]" />
          <label className="ml-2 flex shrink-0 items-center gap-1.5">
            <input type="checkbox" className="size-[19px] appearance-none rounded-sm bg-[#545454]" />
            笔画防抖
          </label>
          <div className="ml-[30px] flex gap-3.5">
            <Slider label="半径" value="35 px" fill="w-1/3" />
            <Slider label="系数" value="0.750" fill="w-3/4" />
          </div>
          <span className="ml-3.5 shrink-0">拖...</span>
          <Dropdown label="拖动" value="调整" className="ml-3.5 w-[76px]" />
          <div className="ml-auto flex items-center">
            <Chevron className="mr-1.5 size-3.5" />
            <span className="h-6 w-5 bg-[conic-gradient(#e8b030,#e03030,#d05020,#30b060,#30a0e0,#30d080,#e8b030)] [clip-path:polygon(50%_0,100%_25%,100%_75%,50%_100%,0_75%,0_25%)]" />
            <div className="ml-2.5 flex gap-px overflow-hidden rounded-l">
              <IconButton name="object" label="物体属性" className="w-7 bg-[#4772b3] text-white" />
              <IconButton name="material" label="材质属性" className="w-7 bg-[#545454] text-[#b5b5b5]" />
              <IconButton name="scene" label="场景属性" className="w-7 bg-[#545454] text-[#b5b5b5]" />
              <IconButton name="world" label="世界属性" className="w-7 bg-[#545454] text-[#b5b5b5]" />
            </div>
          </div>
        </div>
      </div>
      <div className="relative flex min-h-0 flex-1 overflow-hidden pt-4 pl-[11px]">
        <div className="flex w-[58px] shrink-0 flex-col gap-2.5">
          {toolGroups.map((group) => (
            <div key={group[0][0]} className="shrink-0 divide-y divide-[#3d3d3d] overflow-hidden rounded-md bg-[#282828]">
              {group.map(([icon, label]) => (
                <button key={icon} aria-label={label} className={clsx("relative flex h-[49px] w-full items-center justify-center", icon === "annotate" && "bg-[#4772b3]")}>
                  <Icon name={icon} className="size-9" />
                  {["selectMove", "scale", "annotate"].includes(icon) && (
                    <span className="absolute right-1 bottom-1 border-4 border-transparent border-r-[#999] border-b-[#999]" />
                  )}
                </button>
              ))}
            </div>
          ))}
        </div>
        <div className="ml-[26px] text-white [text-shadow:1px_1px_2px_#000]">
          <p className="leading-6">用户透视</p>
          <p className="mt-[3px] leading-6">(1) Collection | Cube</p>
        </div>
        <div className="absolute top-[190px] left-[219px] w-[196px] text-[40px] leading-none text-white">
          <p>X</p>
          <svg viewBox="0 0 46 60" fill="none" stroke="currentColor" strokeWidth="2" className="mt-[22px] h-[60px] w-[46px]" aria-hidden="true">
            <path d="M1 13C1 5 5 1 13 1h20c8 0 12 4 12 12v24c0 14-8 22-22 22S1 51 1 37zM1 31h44M16 1v30M30 1v30" />
          </svg>
          <hr className="mt-[21px] border-t-2 border-white" />
          <p className="mt-4 font-['Noto_Sans_CJK_SC',sans-serif]">删除</p>
        </div>
        <div className="absolute top-0 right-0 flex w-[130px] flex-col items-center">
          <svg viewBox="0 0 130 130" className="mt-5 h-[130px] w-[130px] text-[16px] font-bold" textAnchor="middle">
            <circle cx="11" cy="45" r="12" className="fill-[#6b2c3d] stroke-[#8a2c45]" />
            <circle cx="55" cy="93" r="11" className="fill-[#38465e] stroke-[#3f5f96]" />
            <circle cx="35" cy="89" r="12" className="fill-[#4f7a24] stroke-[#9bc94a]" strokeWidth="1.500" />
            <path d="M55 58 73 28" className="stroke-[#7fae2c]" strokeWidth="2" />
            <path d="M55 58 95 70" className="stroke-[#d93359]" strokeWidth="2" />
            <circle cx="74" cy="28" r="12" className="fill-[#6ca31e]" />
            <text x="74" y="34">Y</text>
            <path d="M55 58V24" className="stroke-[#5b96e0]" strokeWidth="2" />
            <circle cx="55" cy="23" r="13" className="fill-[#2f86ea]" />
            <text x="55" y="29">Z</text>
            <circle cx="99" cy="71" r="12" className="fill-[#e0214f]" />
            <text x="99" y="77">X</text>
          </svg>
        </div>
        <Chevron dir="left" className="absolute top-7 right-0 size-3.5 text-[#aaa]" />
        <div className="absolute top-[139px] right-3.5 flex flex-col gap-[5px]">
          {[["zoom", "缩放视图"], ["hand", "平移视图"], ["movie", "相机视图"], ["persp", "透视/正交"]].map(([icon, label]) => (
            <button key={icon} aria-label={label} className="flex size-10 items-center justify-center rounded-full bg-[#2f2f2f] text-[#e6e6e6]">
              <Icon name={icon} className="size-6" />
            </button>
          ))}
        </div>
      </div>
    </section>
  );
}

const socketColors: Record<string, string> = {
  geometry: "fill-[#1de9a4]",
  bool: "fill-[#c9a6d6]",
  vector: "fill-[#6a58c8]",
  int: "fill-[#598c5c]",
  float: "fill-[#a1a1a1]",
};

function Socket({ kind, shape = "circle", side }: { kind: string; shape?: "circle" | "diamond" | "dot"; side: "left" | "right" }) {
  return (
    <svg viewBox="0 0 12 14" className={clsx("absolute h-3.5 w-3 stroke-[#151515]", socketColors[kind], side === "left" ? "-left-1.5" : "-right-1.5")} aria-hidden="true">
      {shape === "circle" ? <ellipse cx="6" cy="7" rx="5.500" ry="6" /> : <path d="m6 .5 5.500 6.500L6 13.500.5 7z" />}
      {shape === "dot" && <circle cx="6" cy="7" r="1.500" className="fill-[#111] stroke-none" />}
    </svg>
  );
}

function Output({ label, kind, shape }: { label: string; kind: string; shape?: "circle" | "diamond" }) {
  return (
    <div className="relative flex h-[26px] items-center justify-end pr-3.5">
      {label}
      <Socket kind={kind} shape={shape} side="right" />
    </div>
  );
}

function Input({ label, kind, shape }: { label: string; kind: string; shape?: "circle" | "diamond" | "dot" }) {
  return (
    <div className="relative flex h-[26px] items-center pl-[13px]">
      <Socket kind={kind} shape={shape} side="left" />
      {label}
    </div>
  );
}

function NumberInput({ label, kind, shape, value }: { label: string; kind: string; shape?: "circle" | "dot"; value: string }) {
  return (
    <div className="relative flex h-[26px] items-center pr-3.5 pl-[13px]">
      <Socket kind={kind} shape={shape} side="left" />
      <label className="flex h-[23px] min-w-0 flex-1 items-center rounded bg-[#545454] pr-[18px] pl-5">
        <span className="shrink-0">{label}</span>
        <input defaultValue={value} className="w-0 min-w-0 flex-1 bg-transparent text-right outline-none" />
      </label>
    </div>
  );
}

function NodeGroup({ offset, scale, each, input, className }: { offset?: string; scale: string; each: boolean; input?: boolean; className: string }) {
  return (
    <article className={clsx("absolute w-[251px] rounded-md bg-[#303030] pb-[5px] shadow-[0_2px_8px_#000a]", className)}>
      <h3 className="flex h-6 items-center rounded-t-md bg-[#3a4d22] pr-1 pl-3">
        <Chevron className="mr-1.5 size-3" />
        jichu-suofang-neicha
        <Icon name="nodeTree" className="ml-auto size-[17px]" />
        <small className="-ml-0.5 self-end text-[11px] leading-3">3</small>
      </h3>
      <div className="pt-[5px]">
        <Output label="几何数据" kind="geometry" />
        <Output label="顶" kind="bool" shape="diamond" />
        <Output label="边" kind="bool" shape="diamond" />
        <div className="flex h-[29px] items-center pr-3.5 pb-px pl-4">
          <button aria-label="节点组" className="flex h-[22px] w-[34px] items-center justify-center bg-[#252525]">
            <Icon name="nodeTree" className="size-[18px]" />
            <Chevron className="size-2.5" />
          </button>
          <input aria-label="节点组名称" defaultValue="jichu-suofang-..." className="h-[22px] min-w-0 flex-1 bg-[#1d1d1d] pl-2.5 outline-none" />
          <button aria-label="使用者" className="h-[22px] w-7 bg-[#484848] leading-none">3</button>
          <button aria-label="伪用户" className="flex h-[22px] w-6 items-center justify-center rounded-r bg-[#4772b3] text-white">
            <Icon name="shieldCheck" className="size-[18px]" />
          </button>
        </div>
        <Input label="网格" kind="geometry" />
        <Input label="选中项" kind="bool" shape="diamond" />
        {input ? <Input label="偏移比例" kind="float" shape="dot" /> : <NumberInput label="偏移比例" kind="float" shape="dot" value={offset ?? ""} />}
        <div className="relative flex h-[26px] items-center pl-[13px]">
          <Socket kind="bool" side="left" />
          <label className="relative flex items-center gap-1">
            <input type="checkbox" defaultChecked={each} className="peer size-[17px] appearance-none rounded-sm bg-[#484848] checked:bg-[#4772b3]" />
            <svg viewBox="0 0 16 16" className="absolute left-0 hidden size-[17px] fill-none stroke-white stroke-2 peer-checked:block" aria-hidden="true">
              <path d="m3 8 4 4 6-8" />
            </svg>
            各面
          </label>
        </div>
        <NumberInput label="缩放" kind="float" shape="dot" value={scale} />
      </div>
    </article>
  );
}

function ConeNode() {
  return (
    <article className="absolute -top-[26px] left-20 w-[176px] rounded-md bg-[#303030] pt-[29px] pb-1 shadow-[0_2px_8px_#000a]">
      <Output label="网格" kind="geometry" />
      <Output label="顶" kind="bool" shape="diamond" />
      <Output label="底" kind="bool" shape="diamond" />
      <Output label="边" kind="bool" shape="diamond" />
      <Output label="UV 贴图" kind="vector" shape="diamond" />
      <div className="mt-[7px] flex h-[26px] items-center pr-3.5 pl-[13px]">
        <label htmlFor="fill-type" className="w-[66px] shrink-0">填充类...</label>
        <div className="relative flex h-[22px] min-w-0 flex-1 items-center rounded bg-[#262626]">
          <select id="fill-type" className="h-full w-full appearance-none bg-transparent pl-2 outline-none">
            <option>多边形</option>
          </select>
          <Chevron className="pointer-events-none absolute right-1 size-2.5" />
        </div>
      </div>
      <NumberInput label="顶点" kind="int" value="32" />
      <NumberInput label="侧段" kind="int" value="1" />
      <NumberInput label="填充段" kind="int" value="1" />
      <Input label="顶部半径" kind="float" />
      <Input label="底部半径" kind="float" />
      <Input label="深度" kind="float" />
    </article>
  );
}

function NodeEditor() {
  return (
    <section className="flex min-h-0 flex-[396] flex-col overflow-hidden bg-[#1c1c1c]">
      <div className="flex h-[39px] shrink-0 items-center bg-[#212121] pt-0.5 pr-3 pl-[11px]">
        <IconMenu name="geoNodes" label="编辑器类型" className="w-[45px]" />
        <Dropdown label="节点类型" value="修改器" className="ml-2.5 w-[100px]" />
        <MenuItems items={["视图", "选择", "添加", "节点"]} className="ml-[18px]" />
        <div className="flex min-w-0 flex-1 items-center pl-[233px]">
          <div className="flex h-7 shrink-0 items-center overflow-hidden rounded outline outline-[#333]">
            <button aria-label="浏览节点树" className="flex h-full w-[45px] items-center justify-center gap-0.5 border-r border-[#333]">
              <Icon name="nodeTree" />
              <Chevron />
            </button>
            <input aria-label="节点树名称" defaultValue="Geometry Nodes" className="h-full w-[150px] bg-[#1d1d1d] pl-2.5 text-[16px] outline-none" />
            <IconButton name="shield" label="伪用户" className="w-7 bg-[#484848]" />
            <IconButton name="copy" label="新建" className="w-8 bg-[#484848]" />
            <button aria-label="断开" className="flex h-7 w-7 items-center justify-center bg-[#484848]"><Icon name="close" className="size-4" /></button>
          </div>
          <Icon name="pin" className="ml-3 size-[22px] text-[#999]" />
        </div>
        <IconButton name="parent" label="上一级" className="w-7 rounded bg-[#2b2b2b] text-[#666]" />
        <IconButton name="magnet" label="吸附" className="ml-2 w-7 rounded-l bg-[#484848] text-[#999]" />
        <IconMenu name="gridSnap" label="吸附至" className="w-[45px]" />
        <IconButton name="overlay" label="叠加层" className="ml-2 w-7 rounded-l bg-[#4772b3] text-white" />
        <MenuArrow label="叠加层选项" />
      </div>
      <div className="relative min-h-0 flex-1 overflow-hidden text-[14px]">
        <svg className="absolute inset-0 size-full" fill="none" aria-hidden="true">
          <g transform="translate(0 -614)">
            <g className="stroke-[#a0a0a0]" strokeWidth="2.500">
              <path d="M0 837C40 860 42 872 80 872M0 843C40 890 45 898 80 898M0 868C40 912 45 924 80 924" />
              <path d="M0 853C150 868 260 902 368 901" />
            </g>
            <g className="stroke-[#9f90a5]" strokeWidth="1.300">
              <path d="M256 657C312 657 300 875 368 875M256 708C370 708 400 660 494 614M619 768C655 768 650 891 691 891M949 614C985 716 1000 716 1015 716M1266 635C1285 635 1290 630 1308 614" />
            </g>
            <path d="M256 682C500 680 760 676 1015 673L1583 667" className="stroke-[#8a4f96]" />
            <path d="M256 682C500 680 760 676 1015 673L1583 667" className="stroke-[#c0b4c4]" strokeDasharray="14 5" />
          </g>
        </svg>
        <ConeNode />
        <NodeGroup className="top-[86px] left-[368px]" scale="1.000" each input />
        <NodeGroup className="top-[102px] left-[691px]" offset="0.000" scale="0.670" each={false} />
        <NodeGroup className="-top-[73px] left-[1015px]" offset="-0.080" scale="1.000" each />
        <svg className="pointer-events-none absolute inset-0 size-full" fill="none" aria-hidden="true">
          <g transform="translate(0 -614)">
            <path d="M262 631C310 640 315 849 362 849M624 743C656 750 652 865 686 865M947 758C980 758 980 690 1010 690" className="stroke-[#1de9a4]" strokeWidth="3" />
            <path d="M750 648v23l5-4 4 8 4-2-4-8 8-1z" className="fill-white stroke-black" strokeWidth=".5" />
          </g>
        </svg>
        <nav className="absolute top-5 left-0 flex items-center text-[16px] [text-shadow:0_0_2px_#000]">
          <Chevron dir="right" className="size-3.5 text-[#999]" />
          <Icon name="object" className="ml-3.5 size-[22px]" />
          <a href="#cube" className="ml-3.5">Cube</a>
          <Chevron dir="right" className="ml-[22px] size-3.5" />
          <Icon name="geoNodes" className="ml-2.5 size-[22px]" />
          <a href="#modifier" className="ml-3">GeometryNodes</a>
          <Chevron dir="right" className="ml-[22px] size-3.5" />
          <Icon name="nodeTree" className="ml-3 size-[22px]" />
          <a href="#tree" className="ml-3.5">Geometry Nodes</a>
        </nav>
        <Chevron dir="left" className="absolute top-6 right-0 size-3.5 text-[#aaa]" />
        <span className="absolute right-0 bottom-7 h-[139px] w-1.5 rounded bg-[#3a3a3a]" />
        <span className="absolute bottom-0.5 left-[98px] h-1.5 w-[590px] rounded bg-white/10" />
      </div>
    </section>
  );
}

function Timeline() {
  return (
    <section className="flex h-[76px] shrink-0 flex-col overflow-hidden rounded-t-md bg-[#1d1d1d]">
      <div className="flex h-[38px] shrink-0 items-center bg-[#303030] pt-px pr-2.5 pl-3.5">
        <IconMenu name="clock" label="编辑器类型" className="w-[42px]" />
        <Dropdown label="回放" value="回放" className="ml-2.5 w-[67px] rounded-r-none" />
        <Dropdown label="插帧" value="插帧" className="w-[70px] rounded-l-none" />
        <MenuItems items={["视图", "标记"]} className="ml-4" />
        <div className="flex flex-1 items-center justify-center pl-[69px]">
          <IconButton name="record" label="自动插帧" className="w-7 rounded-l bg-[#545454] text-[#999]" />
          <span className="flex h-7 w-[28px] items-center justify-center text-[#555]"><Chevron className="size-2.5" /></span>
          <div className="ml-2 flex w-[172px] gap-px overflow-hidden rounded">
            {[["toStart", "起始帧"], ["prevKey", "上一关键帧"], ["playBack", "倒放"], ["play", "播放"], ["nextKey", "下一关键帧"], ["toEnd", "结束帧"]].map(([icon, label]) => (
              <IconButton key={icon} name={icon} label={label} className="flex-1 bg-[#545454]" />
            ))}
          </div>
        </div>
        <input aria-label="当前帧" defaultValue="1" className="h-7 w-[106px] rounded bg-[#545454] text-center outline-none" />
        <div className="ml-2 flex gap-px overflow-hidden rounded">
          <IconButton name="stopwatch" label="预览范围" className="w-7 bg-[#545454]" />
          <label className="flex h-7 w-[127px] items-center bg-[#545454] pr-[22px] pl-[23px]">
            <span className="shrink-0">起始</span>
            <input defaultValue="1" className="w-0 min-w-0 flex-1 bg-transparent text-right outline-none" />
          </label>
          <label className="flex h-7 w-[127px] items-center bg-[#545454] pr-[21px] pl-[23px]">
            <span className="shrink-0">结束</span>
            <input defaultValue="250" className="w-0 min-w-0 flex-1 bg-transparent text-right outline-none" />
          </label>
        </div>
      </div>
      <div className="relative flex flex-1 pt-1.5 pl-14 text-[#a0a0a0]">
        {[20, 40, 60, 80, 100, 120, 140, 160, 180, 200, 220, 240].map((frame) => (
          <span key={frame} className="flex-1 text-center">{frame}</span>
        ))}
        <span className="absolute top-[5px] left-0 h-6 w-[18px] rounded-r bg-[#4772b3] text-white">1</span>
        <span className="absolute right-[72px] bottom-0 left-[52px] h-[13px] rounded-full bg-[#5a5a5a]/90" />
        <span className="absolute right-[74px] bottom-0.5 size-2.5 rounded-full bg-[#333]" />
        <Chevron dir="left" className="absolute right-0 bottom-0 size-3.5 text-[#888]" />
      </div>
    </section>
  );
}

const outlinerRows = [
  { label: "Collection", icon: "collection", checked: true },
  { label: "Cube", icon: "objectMesh" },
  { label: "xiangji", icon: "collection", checked: false },
];

function SearchField({ className }: { className?: string }) {
  return (
    <label className={clsx("flex h-7 items-center gap-2 rounded bg-[#1d1d1d] pl-1.5 outline outline-[#3a3a3a]", className)}>
      <Icon name="search" />
      <input type="search" aria-label="搜索" placeholder="搜索" className="min-w-0 flex-1 bg-transparent outline-none placeholder:text-[#777]" />
    </label>
  );
}

function Outliner() {
  return (
    <section className="relative flex min-h-0 flex-[274] flex-col overflow-hidden rounded-md bg-[#292929]">
      <div className="flex h-[39px] shrink-0 items-center bg-[#303030] pr-6 pl-3">
        <IconMenu name="tree" label="编辑器类型" className="w-[42px]" />
        <IconMenu name="images" label="显示模式" className="ml-3 w-[42px]" />
        <SearchField className="ml-auto w-[171px]" />
      </div>
      <div className="flex h-[29px] items-center pl-8">
        <Icon name="collection" />
        <span className="ml-2">场景集合</span>
      </div>
      {outlinerRows.map((row) => {
        const dim = row.label === "xiangji";
        const nested = row.label === "Cube";
        return (
          <div key={row.label} className={clsx("flex h-[29px] items-center pr-[15px]", dim && "text-[#7c7c7c]", row.label === "Collection" && "bg-[#2d2d2d]")}>
            <span className={clsx("flex shrink-0 justify-end", nested ? "w-[79px]" : "w-[50px]")}>
              {!dim && <Chevron dir={nested ? "right" : "down"} className="size-3.5 text-[#aaa]" />}
            </span>
            <span className={clsx("ml-2 flex size-7 shrink-0 items-center justify-center rounded", !dim && "bg-[#4a4a4a]", nested && "text-[#d8925a]")}>
              <Icon name={row.icon} className="size-[21px]" />
            </span>
            <span className="ml-1.5 text-[16px]">{row.label}</span>
            {nested && (
              <span className="ml-8 flex items-center gap-2">
                <Icon name="wrenchLine" className="size-[21px] text-[#6d85d8]" />
                <svg viewBox="0 0 8 16" className="h-4 w-2 fill-none stroke-[#1fc795]" strokeWidth="1.500" aria-hidden="true"><path d="M1 1h5v5H1zM5 6l1 9" /></svg>
              </span>
            )}
            <span className="ml-auto flex items-center gap-2.5 pb-1">
              {row.checked !== undefined && (
                <label className="relative flex">
                  <input type="checkbox" aria-label={row.label} defaultChecked={row.checked} className="peer size-[15px] appearance-none border border-current checked:bg-[#e6e6e6]" />
                  <svg viewBox="0 0 16 16" className="absolute hidden size-[15px] fill-none stroke-[#222] stroke-3 peer-checked:block" aria-hidden="true"><path d="m3 8 4 4 6-9" /></svg>
                </label>
              )}
              <button aria-label="在视图中隐藏"><Icon name="eye" className="size-5" /></button>
              <button aria-label="在渲染中禁用"><Icon name="camera" className="size-5" /></button>
            </span>
          </div>
        );
      })}
      <span className="absolute right-6 bottom-0.5 left-3 h-1.5 rounded bg-[#3d3d3d]" />
    </section>
  );
}

const propertyTabs = [
  { icon: "tools", label: "工具", style: "mt-[9px] mb-2.5 text-[#b5b5b5]" },
  { icon: "render", label: "渲染", style: "text-[#b5b5b5]" },
  { icon: "printer", label: "输出", style: "text-[#b5b5b5]" },
  { icon: "images", label: "视图层", style: "text-[#b5b5b5]" },
  { icon: "scene", label: "场景", style: "text-[#b5b5b5]" },
  { icon: "world", label: "世界环境", style: "text-[#b94a60]" },
  { icon: "collectionLine", label: "集合", style: "my-3 text-[#d5d5d5]" },
  { icon: "object", label: "物体", style: "text-[#c98547]" },
  { icon: "wrench", label: "修改器", style: "text-[#5c7fd0]" },
  { icon: "particles", label: "粒子", style: "text-[#6a83d8]" },
  { icon: "physics", label: "物理", style: "text-[#5c86c8]" },
  { icon: "constraint", label: "约束", style: "text-[#6880c8]" },
  { icon: "meshData", label: "数据", style: "text-[#1fc98f]" },
  { icon: "material", label: "材质", style: "rounded-l bg-[#303030] text-[#d0607a]" },
  { icon: "texture", label: "纹理", style: "mt-2.5 text-[#b04a62]" },
];

const materials = [
  { name: "Material", ball: "bg-[radial-gradient(circle_at_35%_40%,#eee,#bbb_60%,#444)]" },
  { name: "jin", ball: "bg-[radial-gradient(circle_at_35%_40%,#f0e0c0,#a58a62_60%,#4a3a20)]" },
  { name: "mian", ball: "bg-[radial-gradient(circle_at_35%_40%,#f08090,#b02040_60%,#401018)]" },
];

function Grip() {
  return <span className="block h-2 w-4 bg-[radial-gradient(circle,#aaa_1px,transparent_1.500px)] bg-[length:4px_4px]" />;
}

function PropertyRow({ label, dot, fill, value, text, color }: { label: string; dot: string; fill?: string; value?: string; text?: string; color?: string }) {
  return (
    <div className="flex h-9 items-center">
      <span className="w-[92px] shrink-0 whitespace-nowrap text-right">{label}</span>
      <span className={clsx("ml-3.5 flex h-7 w-[27px] shrink-0 items-center justify-center rounded-l bg-[#272727]", !text && "mr-px")}>
        <i className={clsx("h-3 w-[11px] rounded-full outline outline-black/60", dot)} />
      </span>
      {text && <button className="h-7 w-[92px] rounded-r bg-[#272727] pl-0.5 text-left whitespace-nowrap">{text}</button>}
      {color && <button aria-label={label} className={clsx("h-7 w-[91px] rounded-r", color)} />}
      {value && (
        <span className="relative h-7 w-[91px] overflow-hidden rounded-r bg-[#545454]">
          {fill && <span className={clsx("absolute inset-y-0 left-0 bg-[#4772b3]", fill)} />}
          <input aria-label={label} defaultValue={value} className="relative size-full bg-transparent text-center outline-none" />
        </span>
      )}
      {!text && <i className="ml-3 size-1.5 rounded-full bg-[#ddd]" />}
    </div>
  );
}

function Properties() {
  return (
    <section className="flex min-h-0 flex-[696] flex-col overflow-hidden rounded-md bg-[#303030]">
      <div className="flex h-[38px] shrink-0 items-center pr-2.5 pl-3">
        <IconMenu name="toggles" label="编辑器类型" className="w-[42px]" />
        <SearchField className="ml-9 w-[172px]" />
        <MenuArrow label="选项" className="ml-auto rounded" />
      </div>
      <div className="flex min-h-0 flex-1">
        <nav className="flex w-[42px] shrink-0 flex-col overflow-hidden rounded-tr bg-[#1c1c1c]">
          {propertyTabs.map((tab) => (
            <button key={tab.label} aria-label={tab.label} className={clsx("ml-1 flex h-10 shrink-0 items-center justify-center", tab.style)}>
              <Icon name={tab.icon} />
            </button>
          ))}
        </nav>
        <div className="flex min-w-0 flex-1 flex-col overflow-hidden pr-2.5 pl-2.5">
          <div className="flex h-[52px] shrink-0 items-center pl-1.5">
            <Icon name="object" />
            <span className="ml-3.5 text-[16px]">Cube</span>
            <Chevron dir="right" className="ml-5 size-3.5" />
            <Icon name="material" className="ml-3 size-[22px]" />
            <span className="ml-3 text-[16px]">mian</span>
            <Icon name="pin" className="ml-auto size-[22px] text-[#999]" />
          </div>
          <div className="mt-3.5 flex shrink-0 justify-between pl-1">
            <div className="flex h-[170px] w-[222px] flex-col rounded bg-[#242424] px-1.5 pt-1.5 text-[16px] outline outline-[#3a3a3a]">
              {materials.map((m) => (
                <button key={m.name} className={clsx("mb-0.5 flex h-[27px] items-center gap-3 rounded pl-2 text-left", m.name === "mian" && "bg-[#4772b3] text-white")}>
                  <i className={clsx("size-[19px] rounded-full", m.ball)} />
                  {m.name}
                </button>
              ))}
              <div className="mt-auto flex items-center pb-2 pl-2">
                <svg viewBox="0 0 10 10" className="size-2.5 fill-[#bbb]" aria-hidden="true"><path d="M0 0v10l10-5z" /></svg>
                <span className="ml-[92px]"><Grip /></span>
              </div>
            </div>
            <div className="flex w-[27px] flex-col">
              <button aria-label="添加材质槽" className="flex h-[27px] items-center justify-center rounded-t bg-[#545454]">
                <svg viewBox="0 0 14 14" className="size-3.5 stroke-current" aria-hidden="true"><path d="M7 0v14M0 7h14" /></svg>
              </button>
              <button aria-label="移除材质槽" className="mt-px flex h-[27px] items-center justify-center rounded-b bg-[#545454]">
                <svg viewBox="0 0 14 14" className="size-3.5 stroke-current" aria-hidden="true"><path d="M0 7h14" /></svg>
              </button>
              <MenuArrow label="材质选项" className="mt-2.5 rounded" />
              <button aria-label="上移" className="mt-2.5 flex h-[27px] items-center justify-center rounded-t bg-[#545454]">
                <svg viewBox="0 0 12 10" className="h-2.5 w-3 fill-current" aria-hidden="true"><path d="M0 10h12L6 0z" /></svg>
              </button>
              <button aria-label="下移" className="mt-px flex h-[27px] items-center justify-center rounded-b bg-[#545454]">
                <svg viewBox="0 0 12 10" className="h-2.5 w-3 fill-current" aria-hidden="true"><path d="M0 0h12L6 10z" /></svg>
              </button>
            </div>
          </div>
          <div className="mt-[9px] flex h-7 shrink-0 items-center pl-1">
            <IconMenu name="material" label="浏览材质" className="w-10 rounded-r-none" />
            <input aria-label="材质名称" defaultValue="mi..." className="h-7 w-[53px] min-w-0 bg-[#1d1d1d] pl-3 text-[16px] outline-none" />
            <button className="h-7 w-[30px] bg-[#545454] text-[16px]">2</button>
            <IconButton name="shield" label="伪用户" className="w-7 bg-[#545454]" />
            <IconButton name="copy" label="新建" className="w-7 bg-[#545454]" />
            <button aria-label="断开" className="flex h-7 w-6 items-center justify-center rounded-r bg-[#545454]"><Icon name="close" className="size-4" /></button>
            <IconMenu name="meshData" label="链接" className="ml-auto w-10" />
          </div>
          <button className="mt-4 flex h-[35px] shrink-0 items-center gap-2 rounded bg-[#3d3d3d] pr-2.5 pl-3">
            <Chevron dir="right" className="size-3.5" />
            预览
            <span className="ml-auto"><Grip /></span>
          </button>
          <div className="mt-1 shrink-0 rounded bg-[#3d3d3d]">
            <button className="flex h-[35px] w-full items-center gap-2 pr-2.5 pl-3">
              <Chevron className="size-3.5" />
              表(曲)面
              <span className="ml-auto"><Grip /></span>
            </button>
            <div className="mt-2 mb-3.5">
              <PropertyRow label="表(曲)面" dot="bg-[#63c763]" text="原理化 B..." />
            </div>
            <PropertyRow label="基础色" dot="bg-[#c7c729]" color="bg-[#9c2040]" />
            <PropertyRow label="金属度" dot="bg-[#a1a1a1]" value="0.000" />
            <PropertyRow label="糙度" dot="bg-[#a1a1a1]" value="0.500" fill="w-1/2" />
            <PropertyRow label="折射率(I..." dot="bg-[#a1a1a1]" value="1.500" />
            <PropertyRow label="Alpha" dot="bg-[#a1a1a1]" value="1.000" fill="w-full" />
            <PropertyRow label="法向" dot="bg-[#6a58c8]" text="默认" />
            <div className="flex h-9 items-center pl-6">
              <Chevron dir="right" className="size-3.5" />
              <span className="ml-3.5">次表面</span>
            </div>
          </div>
        </div>
      </div>
    </section>
  );
}

const hints = [
  { label: "选择", button: "M3 9V6c0-3 2-5 6-5v8z", width: "w-[283px]" },
  { label: "平移视图", button: "M8 4h4v7H8z", width: "w-[283px]" },
  { label: "节点", button: "M11 1c4 0 6 2 6 5v5h-6z", width: "" },
];

const stats = ["Collection", "Cube", "顶点:192", "面:145", "三角面:318", "物体:0/1", "时长: 00:10+10 (帧 1/250)", "内存: 72.8 MiB", "显存: 1.2/2.0 GiB"];

function StatusBar() {
  return (
    <footer className="relative flex h-8 shrink-0 items-center overflow-hidden bg-[#181818] pl-3.5 text-[#8f8f8f]">
      {hints.map((hint) => (
        <span key={hint.label} className={clsx("flex shrink-0 items-center", hint.width)}>
          <svg viewBox="0 0 20 20" className="mr-[3px] size-6 fill-none stroke-current" aria-hidden="true">
            {icons.mouse}
            <path d={hint.button} className="fill-current stroke-none" />
          </svg>
          {hint.label}
        </span>
      ))}
      <div className="ml-auto flex shrink-0 items-center whitespace-nowrap">
        {stats.map((s) => (
          <span key={s} className="flex items-center">
            {s}
            <span className="mx-[7px] h-5 w-px bg-[#777]" />
          </span>
        ))}
        <Icon name="globeOff" className="mx-0.5 size-[22px]" />
        <span className="mx-[7px] h-5 w-px bg-[#777]" />
        4
      </div>
    </footer>
  );
}

export default function App() {
  return (
    <div className="relative flex h-screen flex-col overflow-hidden bg-[#181818] font-[Inter,'Noto_Sans_CJK_SC',sans-serif] text-[17px] leading-6 text-[#dcdcdc]">
      <TitleBar />
      <TopBar />
      <div className="flex min-h-0 flex-1 gap-1 pt-px pr-1">
        <main className="flex min-w-0 flex-1 flex-col">
          <div className="flex min-h-0 flex-[501] gap-1 pb-0.5 pl-px">
            <Spreadsheet />
            <Viewport />
          </div>
          <NodeEditor />
          <div className="pt-0.5">
            <Timeline />
          </div>
        </main>
        <aside className="flex w-[329px] shrink-0 flex-col gap-1">
          <Outliner />
          <Properties />
        </aside>
      </div>
      <StatusBar />
      <div className="pointer-events-none absolute bottom-3 left-3 flex items-center gap-2 text-[36px] leading-9 font-bold text-[#b0b0b0] opacity-50">
        <svg viewBox="0 0 38 38" className="size-[38px]" aria-hidden="true">
          <path fillRule="evenodd" d="M5 0h28a5 5 0 0 1 5 5v28a5 5 0 0 1-5 5H5a5 5 0 0 1-5-5V5a5 5 0 0 1 5-5zm7 7v9l-6 4 6 5v6l18-12z" className="fill-current" />
        </svg>
        tafe.cc
      </div>
    </div>
  );
}
